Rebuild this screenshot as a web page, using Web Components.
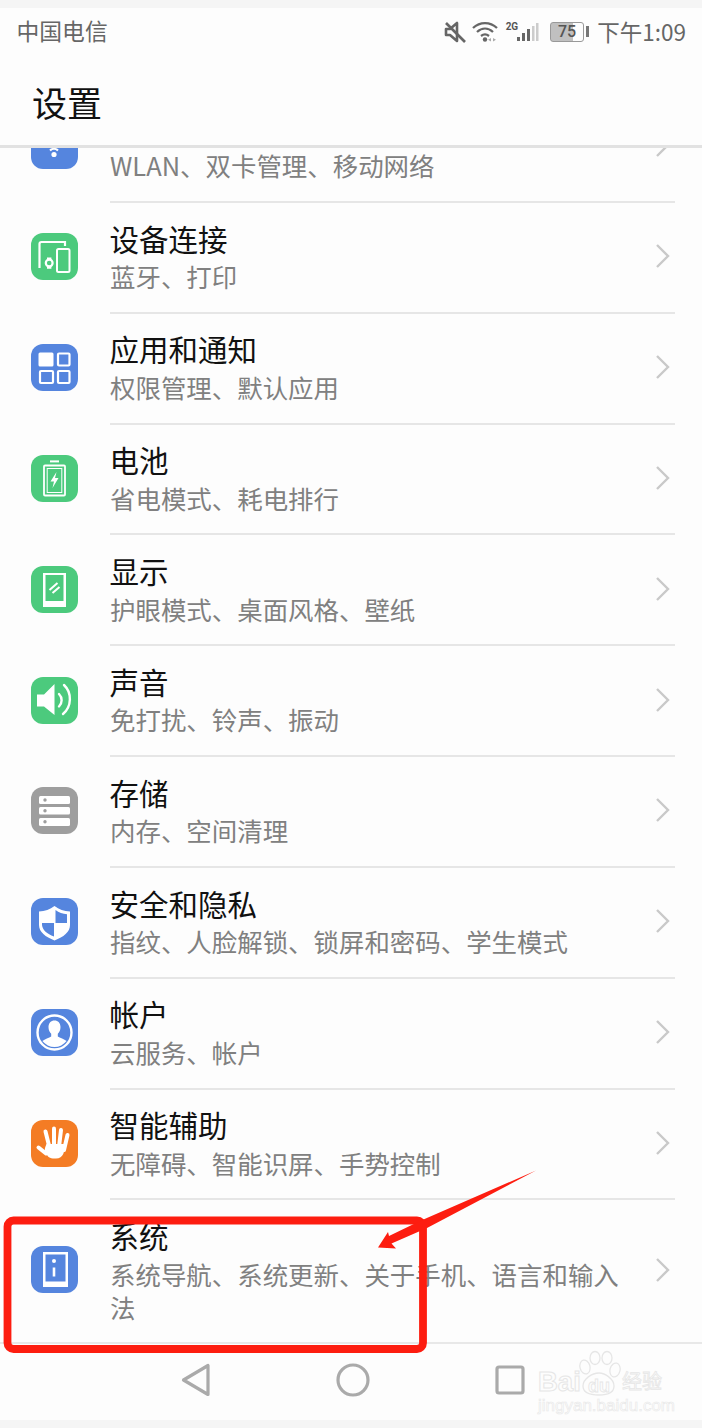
<!DOCTYPE html>
<html lang="zh">
<head>
<meta charset="utf-8">
<title>设置</title>
<style>
html,body{margin:0;padding:0;background:#f5f5f5;}
body{font-family:"Noto Sans CJK SC","Noto Sans",sans-serif;}
</style>
</head>
<body>
<phone-screen>
  <status-bar slot="top"></status-bar>
  <title-bar slot="top">设置</title-bar>
  <settings-list>
    <settings-row title-text="无线和网络" sub="WLAN、双卡管理、移动网络" icon="net" tone="blue"></settings-row>
    <settings-row title-text="设备连接" sub="蓝牙、打印" icon="device" tone="green"></settings-row>
    <settings-row title-text="应用和通知" sub="权限管理、默认应用" icon="apps" tone="blue"></settings-row>
    <settings-row title-text="电池" sub="省电模式、耗电排行" icon="battery" tone="green"></settings-row>
    <settings-row title-text="显示" sub="护眼模式、桌面风格、壁纸" icon="display" tone="green"></settings-row>
    <settings-row title-text="声音" sub="免打扰、铃声、振动" icon="sound" tone="green"></settings-row>
    <settings-row title-text="存储" sub="内存、空间清理" icon="storage" tone="grey"></settings-row>
    <settings-row title-text="安全和隐私" sub="指纹、人脸解锁、锁屏和密码、学生模式" icon="shield" tone="blue"></settings-row>
    <settings-row title-text="帐户" sub="云服务、帐户" icon="user" tone="blue"></settings-row>
    <settings-row title-text="智能辅助" sub="无障碍、智能识屏、手势控制" icon="hand" tone="orange"></settings-row>
    <settings-row last title-text="系统" sub="系统导航、系统更新、关于手机、语言和输入法" icon="system" tone="blue"></settings-row>
  </settings-list>
  <nav-bar slot="bottom"></nav-bar>
  <baidu-mark slot="overlay"></baidu-mark>
  <red-annotation slot="overlay"></red-annotation>
</phone-screen>

<script>
const ICONS = {
  net:`<circle cx="23" cy="32.5" r="2.6" fill="#fff"/><path d="M15 25a11 11 0 0 1 16 0M19 28.5a6 6 0 0 1 8 0" fill="none" stroke="#fff" stroke-width="2.2"/>`,
  device:`<path d="M8.500 35V11a2 2 0 0 1 2-2h23.500v4" fill="none" stroke="#fff" stroke-width="2.200"/>
    <rect x="26" y="16" width="12.500" height="23" rx="1.500" fill="none" stroke="#fff" stroke-width="2"/>
    <path d="M16 24.500h4.400v2.600H16zM16 33h4.400v2.800H16z" fill="#fff"/><circle cx="18.200" cy="30" r="3.400" fill="none" stroke="#fff" stroke-width="2.200"/>`,
  apps:`<rect x="7.500" y="8.500" width="15" height="14" rx="1.500" fill="#fff"/>
    <g fill="none" stroke="#fff" stroke-width="2.200"><rect x="27" y="9.500" width="11.500" height="12" rx="1"/><rect x="9" y="27" width="13" height="12" rx="1"/><rect x="27" y="27" width="11.500" height="12" rx="1"/></g>`,
  battery:`<path d="M19 6.400h9" stroke="#fff" stroke-width="2"/><rect x="13" y="10.500" width="21" height="30" rx="1" fill="none" stroke="#fff" stroke-width="1.800"/>
    <rect x="16.200" y="13.500" width="14.600" height="24" fill="none" stroke="#fff" stroke-width="1"/>
    <path d="M25.500 17l-6 9.500h3.500l-1.500 6.500 6-10h-3.500z" fill="#fff"/>`,
  display:`<path fill-rule="evenodd" d="M12 7h23v34H12zM14.500 9v26h18V9z" fill="#fff"/><path d="M18.500 24l8-7M21.500 27l7-6" stroke="#fff" stroke-width="2" fill="none"/>`,
  sound:`<path d="M6 17.500h7L23.500 7v31L13 29.500H6z" fill="#fff"/><g fill="none" stroke="#fff" stroke-width="2.400" stroke-linecap="round"><path d="M28 17c3.500 3.500 3.500 9 0 12.500"/><path d="M33 8c8 7.500 8 21.500-1 29"/></g>`,
  storage:`<g fill="#fff"><rect x="8" y="9" width="31" height="8" rx="1.500"/><rect x="8" y="20" width="31" height="7.600" rx="1.500"/><rect x="8" y="31" width="31" height="8" rx="1.500"/></g><g fill="#9e9e9e"><circle cx="14" cy="13" r="1.700"/><circle cx="14" cy="23.800" r="1.700"/><circle cx="14" cy="34.800" r="1.700"/></g>`,
  shield:`<path d="M23.500 8C19 11.500 14 13.300 8 13.500V27c0 7 6.500 12 15.500 15.500C32.500 39 39 34 39 27V13.500c-6-.2-11-2-15.500-5.500z" fill="#fff"/>
    <path d="M24.500 12c3.400 2.500 7.300 4 11.500 4.300V25H24.500zM11 25h12v13.500C16 36 11.500 32 11 27z" fill="#5585de"/>`,
  user:`<circle cx="23.500" cy="23.500" r="17" fill="none" stroke="#fff" stroke-width="2.400"/>
    <path d="M23.500 11.500c3.600 0 6 2.700 6 6.500 0 3-1.200 5.400-2.700 6.800v2.600c2 1.400 6.500 2.400 8.800 4.700a15.500 15.500 0 0 1-24.200 0c2.300-2.300 6.800-3.300 8.800-4.700v-2.600c-1.500-1.400-2.700-3.800-2.700-6.800 0-3.800 2.400-6.500 6-6.500z" fill="#fff"/>`,
  hand:`<g stroke="#fff" stroke-width="4" stroke-linecap="round" fill="none"><path d="M7.500 27.500l7.500 6"/><path d="M14.500 11.500l4 16"/><path d="M23 8.500v18"/><path d="M30 10l-2 17"/><path d="M36.500 15l-3.500 15"/></g><path d="M15.500 24h18c.5 7-1 14.500-8.500 14.500-6 .3-8-1-10.500-6C13 29 14.500 27 15.500 24z" fill="#fff"/>`,
  system:`<path fill-rule="evenodd" d="M12 6h25v35H12zM14.500 8.500v27h20v-27z" fill="#fff"/><circle cx="23" cy="15" r="2" fill="#fff"/><path d="M23 21.500v9" stroke="#fff" stroke-width="2.600"/>`
};
const TONES={blue:'#5585de',green:'#4cca7d',grey:'#9e9e9e',orange:'#f47c24'};
function def(name, html){
  customElements.define(name, class extends HTMLElement{
    constructor(){super();this.attachShadow({mode:'open'});}
    connectedCallback(){this.shadowRoot.innerHTML=typeof html==='function'?html(this):html;}
  });
}
def('phone-screen',`<style>
:host{display:flex;flex-direction:column;position:relative;width:702px;height:1428px;box-sizing:border-box;padding:8px 0;background:#f5f5f5;overflow:hidden}
.body{flex:1;min-height:0;overflow:hidden;background:#fdfdfd}
</style><slot name="top"></slot><div class="body"><slot></slot></div><slot name="bottom"></slot><slot name="overlay"></slot>`);
def('status-bar',`<style>
:host{display:flex;align-items:center;justify-content:space-between;height:50px;box-sizing:border-box;padding:0 16px 3px 16.500px;background:#fdfdfd;color:#666;font:22.800px/1 "Noto Sans CJK SC",sans-serif}
.r{display:flex;align-items:center}
svg{display:block}
.batt{width:39px;height:20px;margin-left:11px;margin-right:8.500px;display:flex}
.time{font-size:22.500px}
.lvl{display:block;box-sizing:border-box;width:35px;height:20px;border:1.500px solid #999;border-radius:3px;background:linear-gradient(90deg,#c0c0c0 0 70%,transparent 70%);font:500 16px/17px "Roboto",sans-serif;text-align:center;color:#555}
.nub{width:2.500px;height:11px;background:#777;margin:4.500px 0 0 2px}
.sig{display:flex;align-items:flex-start;margin-left:8px}
.two{font:700 10px/1 "Roboto",sans-serif;color:#555;width:11px;height:10px;letter-spacing:-.3px}
</style>
<span>中国电信</span>
<span class="r">
<svg width="22" height="22" viewBox="0 0 22 22" style="margin-right:6px"><path d="M2 8h4l7-6v18l-7-6H2z" fill="none" stroke="#666" stroke-width="2.600" stroke-linejoin="round"/><path d="M2 2l19 19" stroke="#666" stroke-width="2.600"/></svg>
<svg width="26" height="21" viewBox="0 0 26 21"><g fill="none" stroke="#666" stroke-width="2.300"><path d="M1 7c7-6.500 17-6.500 24 0"/><path d="M5 11c5-4.500 11-4.500 16 0"/><path d="M9 15c2.500-2 5.500-2 8 0"/></g><circle cx="13" cy="18.500" r="2.200" fill="#666"/><path d="M19 17l-3 1.700 3 1.700zM21 17l3 1.700-3 1.700z" fill="#aaa"/></svg>
<span class="sig"><span class="two">2G</span><svg width="22" height="20" viewBox="0 0 22 20"><g fill="#666"><rect x="0" y="15" width="3" height="4"/><rect x="5" y="11" width="3" height="8"/><rect x="10" y="7" width="3" height="12"/></g><g fill="#ccc"><rect x="15" y="4" width="2.500" height="15"/><rect x="19" y="1" width="2.500" height="18"/></g></svg></span>
<span class="batt"><span class="lvl">75</span><span class="nub"></span></span>
<span class="time">下午1:09</span>
</span>`);
def('title-bar',`<style>
:host{display:flex;align-items:center;height:83px;padding:2px 32px 2px;background:#fdfdfd;border-bottom:3.500px solid #e2e2e2;font:35px/1 "Noto Sans CJK SC",sans-serif;color:#111}
</style><slot></slot>`);
def('settings-list',`<style>:host{display:block;margin-top:-56px}</style><slot></slot>`);
def('app-icon',el=>`<style>:host{display:block;width:47px;height:47px}svg{display:block;width:47px;height:47px}</style>
<svg viewBox="0 0 47 47"><rect width="47" height="47" rx="12" fill="${TONES[el.getAttribute('tone')]}"/>${ICONS[el.getAttribute('name')]}</svg>`);
def('settings-row',el=>`<style>
:host{display:flex;align-items:stretch;height:110.850px;font-family:"Noto Sans CJK SC",sans-serif;background:#fdfdfd}
:host([last]){height:142px}
.ic{flex:0 0 78.500px;box-sizing:border-box;padding-left:31px;display:flex;align-items:center;padding-bottom:3px}
.main{flex:1;display:flex;align-items:center;margin-right:27px;margin-left:31.500px;border-bottom:2px solid #e6e6e6}
:host([last]) .main{border-bottom:0}
.txt{width:520px;padding-bottom:3px}
.t{font-size:29.500px;line-height:36px;color:#111;margin-bottom:3.500px;white-space:nowrap;margin-left:-.5px}
.s{font-size:25.450px;line-height:33px;color:#808080}
svg{display:block;margin-left:25px;margin-bottom:2px}
</style>
<div class="ic"><app-icon name="${el.getAttribute('icon')}" tone="${el.getAttribute('tone')}"></app-icon></div>
<div class="main"><div class="txt"><div class="t">${el.getAttribute('title-text')}</div><div class="s">${el.getAttribute('sub')}</div></div>
<svg width="15" height="26" viewBox="0 0 15 26"><path d="M2 2l11 11L2 24" fill="none" stroke="#c9c9c9" stroke-width="2.400"/></svg></div>`);
def('nav-bar',`<style>
:host{display:flex;height:78px;border-top:2.500px solid #e8e8e8;box-sizing:border-box;background:#fdfdfd}
svg{display:block}
.row{display:flex;align-items:center;width:100%;padding:0 177px 4px 181px;justify-content:space-between;box-sizing:border-box}
</style>
<div class="row">
<svg width="30" height="34" viewBox="0 0 30 34"><path d="M27 2.500v29L2.500 17z" fill="none" stroke="#aaa" stroke-width="3.200" stroke-linejoin="round"/></svg>
<svg width="34" height="34" viewBox="0 0 34 34"><circle cx="17" cy="17" r="15" fill="none" stroke="#aaa" stroke-width="3.200"/></svg>
<svg width="30" height="30" viewBox="0 0 30 30"><rect x="2" y="2" width="26" height="26" rx="2" fill="none" stroke="#aaa" stroke-width="3.200"/></svg>
</div>`);
def('baidu-mark',`<style>
:host{position:absolute;left:534px;top:1350px;width:136px;height:66px;display:block;color:transparent;pointer-events:none}
span{position:absolute;white-space:nowrap}
.b{left:4px;top:18px;font:700 27.500px/1 "Liberation Sans",sans-serif;-webkit-text-stroke:1px #e6e6e6}
.du{left:54px;top:27px;font:700 18px/1 "Liberation Sans",sans-serif;-webkit-text-stroke:.8px #e6e6e6}
.c{left:88px;top:21px;font:20px/1 "Noto Sans CJK SC",sans-serif;-webkit-text-stroke:.8px #e6e6e6}
.j{left:4px;top:47px;font:17px/1 "Liberation Sans",sans-serif;-webkit-text-stroke:.6px #e8e8e8}
svg{position:absolute;left:0;top:0}
</style>
<svg width="136" height="50" viewBox="0 0 136 50"><g fill="none" stroke="#e6e6e6" stroke-width="1.300">
<ellipse cx="51" cy="17" rx="5" ry="7" transform="rotate(-15 51 17)"/><ellipse cx="61" cy="8" rx="5" ry="6.500"/><ellipse cx="73" cy="8" rx="5" ry="6.500"/><ellipse cx="81" cy="20" rx="5" ry="7" transform="rotate(15 81 20)"/>
<path d="M65 23c6 0 15 6 15 13s-7 9-15 9-16-2-16-9 9-13 16-13z"/></g></svg>
<span class="b">Bai</span><span class="du">du</span><span class="c">经验</span><span class="j">jingyan.baidu.com</span>`);
def('red-annotation',`<style>:host{position:absolute;left:0;top:0;width:702px;height:1428px;display:block;pointer-events:none}svg{display:block}</style>
<svg width="702" height="1428" viewBox="0 0 702 1428"><rect x="7.500" y="1220.500" width="415.500" height="128.500" rx="6" fill="none" stroke="#fd1d10" stroke-width="7.800"/>
<path d="M536 1170.500L420 1221 389 1236 388 1232 378 1247.500 396 1248.500 391.500 1243.500 427 1228z" fill="#fd1d10"/></svg>`);
</script>
</body>
</html>
